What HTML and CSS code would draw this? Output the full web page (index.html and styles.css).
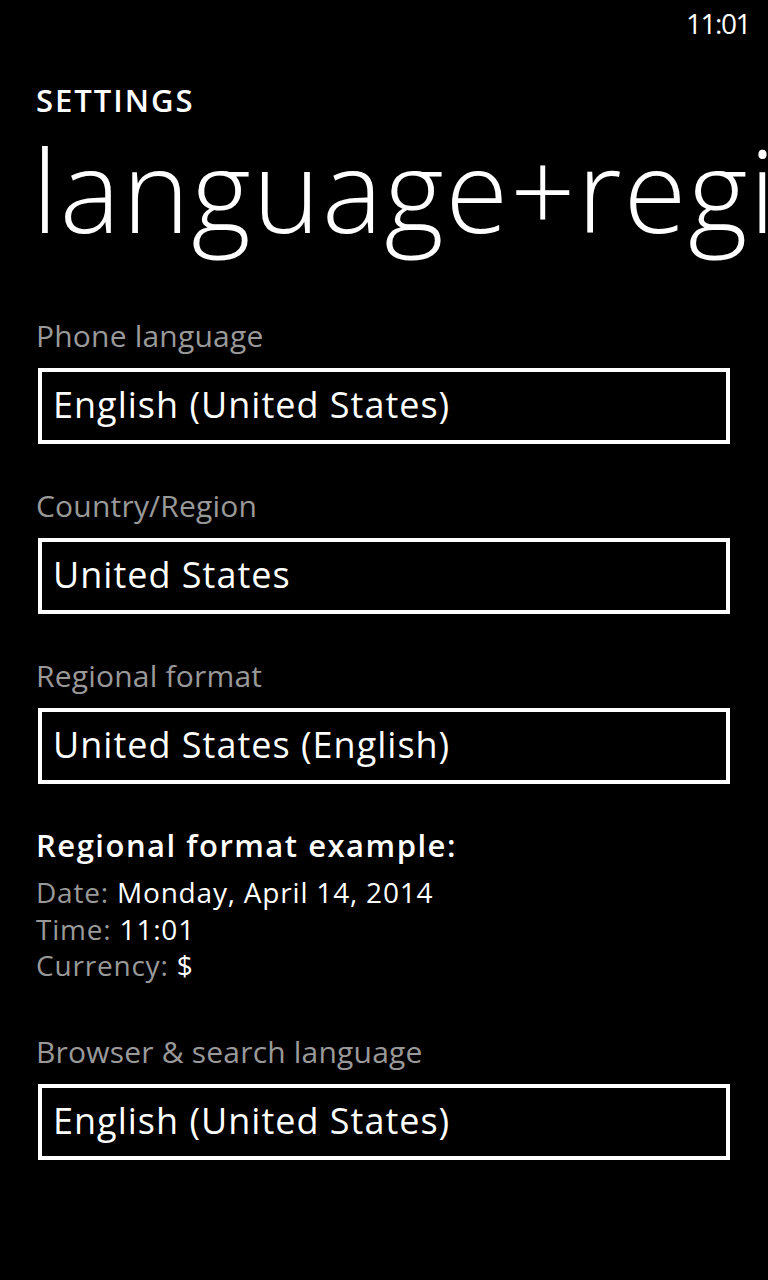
FILE: index.html
```html
<!DOCTYPE html>
<html>
<head>
  <meta charset="UTF-8">
  <title>language+region</title>
  <link rel="stylesheet" href="styles.css">
</head>
<body>
<div class="status-bar">
  <span class="clock">11:01</span>
</div>

<div class="page">
  <div class="app-title">SETTINGS</div>
  <h1 class="page-title">language+region</h1>

  <div class="field first">
    <label class="field-label">Phone language</label>
    <div class="picker">English (United States)</div>
  </div>

  <div class="field">
    <label class="field-label">Country/Region</label>
    <div class="picker">United States</div>
  </div>

  <div class="field">
    <label class="field-label">Regional format</label>
    <div class="picker">United States (English)</div>
  </div>

  <div class="example">
    <h2>Regional format example:</h2>
    <div class="example-row"><span class="muted">Date:</span> Monday, April 14, 2014</div>
    <div class="example-row"><span class="muted">Time:</span> 11:01</div>
    <div class="example-row"><span class="muted">Currency:</span> $</div>
  </div>

  <div class="field last">
    <label class="field-label">Browser &amp; search language</label>
    <div class="picker">English (United States)</div>
  </div>
</div>
</body>
</html>
```

FILE: styles.css
```css
body {
  font-family: "Open Sans", "Noto Sans", sans-serif;
  margin: 0;
  padding: 0;
  background-color: #000;
  color: #fff;
  width: 768px;
  height: 1280px;
  overflow: hidden;
}

.status-bar {
  height: 50px;
  display: flex;
  justify-content: flex-end;
  padding-right: 18px;
}

.clock {
  font-size: 28px;
  line-height: 50px;
  letter-spacing: -1.5px;
  margin-top: -2px;
}

.page {
  padding-left: 36px;
  overflow: hidden;
}

.app-title {
  font-size: 31px;
  font-weight: 600;
  line-height: 22px;
  letter-spacing: 2px;
  margin-top: 39px;
}

.page-title {
  font-size: 114px;
  font-weight: 300;
  line-height: normal;
  letter-spacing: 2px;
  margin: 0 0 0 -4px;
  white-space: nowrap;
}

.field {
  margin-top: 44px;
}

.field.first {
  margin-top: 52px;
}

.field.last {
  margin-top: 50px;
}

.field-label {
  display: block;
  color: #999;
  font-size: 30px;
  line-height: 36px;
  letter-spacing: 0.2px;
  margin-bottom: 14px;
}

.picker {
  width: 692px;
  height: 76px;
  box-sizing: border-box;
  border: 4px solid #fff;
  margin-left: 2px;
  padding-left: 11px;
  font-size: 36px;
  line-height: 66px;
  letter-spacing: 1px;
}

.example {
  margin-top: 41px;
}

.example h2 {
  font-size: 31px;
  font-weight: 600;
  line-height: 40px;
  letter-spacing: 1.5px;
  margin: 0 0 9px;
}

.example-row {
  font-size: 28px;
  line-height: 36.5px;
  letter-spacing: 0.8px;
}

.muted {
  color: #999;
}
```
